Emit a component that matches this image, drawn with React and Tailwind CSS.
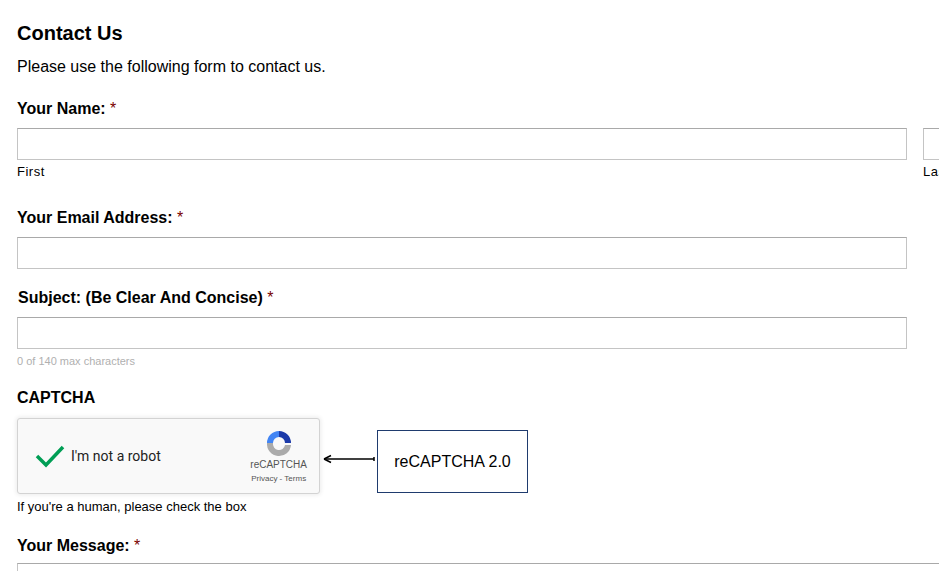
const F = { fontFamily: '"Liberation Sans", Arial, sans-serif' };

function Label({ children, className = '' }) {
  return (
    <div className={`text-[16px] font-bold text-black ${className}`}>
      {children} <span className="font-normal text-[#790000]">*</span>
    </div>
  );
}

function Input({ className = '' }) {
  return <div className={`h-[32px] shrink-0 border border-[#c4c4c4] border-t-[#a9a9a9] bg-white ${className}`} />;
}

export default function App() {
  return (
    <div className="h-[571px] w-[939px] overflow-hidden bg-white text-black" style={F}>
      <div className="w-[1100px] pl-[17px]">
        <h1 className="pt-[20px] text-[20px] font-bold leading-[26px]">Contact Us</h1>
        <p className="mt-[11px] text-[16px] leading-[20px]">Please use the following form to contact us.</p>

        <Label className="mt-[21px] leading-[22px]">Your Name:</Label>
        <div className="mt-[8px] flex gap-[16px]">
          <div className="w-[890px] shrink-0">
            <Input />
            <div className="mt-[2px] text-[13px] tracking-[0.5px]">First</div>
          </div>
          <div className="w-[890px] shrink-0">
            <Input />
            <div className="mt-[2px] text-[13px] tracking-[0.5px]">Last</div>
          </div>
        </div>

        <Label className="mt-[25px] leading-[22px]">Your Email Address:</Label>
        <Input className="mt-[8px] w-[890px]" />

        <Label className="mt-[18px] pl-[1px] leading-[22px]">Subject: (Be Clear And Concise)</Label>
        <Input className="mt-[8px] w-[890px]" />
        <div className="mt-[4px] text-[11px] text-[#b0b0b0]">0 of 140 max characters</div>

        <div className="mt-[18px] text-[16px] font-bold leading-[22px]">CAPTCHA</div>
        <div className="mt-[9px] flex items-start">
          <div className="flex h-[76px] w-[303px] shrink-0 items-center rounded-[3px] border border-[#d3d3d3] bg-[#f9f9f9] shadow-[0_0_4px_1px_rgba(0,0,0,0.08)]">
            <svg className="ml-[17px]" width="30" height="24" viewBox="0 0 30 24">
              <path d="M2 12 L11 21 L28 3" fill="none" stroke="#009e55" strokeWidth="3.5" />
            </svg>
            <span className="ml-[6px] text-[14px] text-[#222]" style={{ fontFamily: 'Roboto, Arial, sans-serif' }}>I'm not a robot</span>
            <div className="ml-auto mr-[12px] flex flex-col items-center">
              <svg width="32" height="32" viewBox="0 0 32 32">
                <path d="M16 4 A12 12 0 0 1 28 16 L22 16 A6 6 0 0 0 16 10 Z" fill="#1c3aa9" />
                <path d="M4 16 A12 12 0 0 1 16 4 L16 10 A6 6 0 0 0 10 16 Z" fill="#4285f4" />
                <path d="M4 16 L10 16 A6 6 0 0 0 22 18 L28 18 A12 12 0 0 1 4 16 Z" fill="#ababab" />
              </svg>
              <div className="text-[10px] leading-[12px] text-[#555]">reCAPTCHA</div>
              <div className="mt-[2px] text-[8px] text-[#555]">Privacy - Terms</div>
            </div>
          </div>
          <svg className="ml-[2px] mt-[36px]" width="54" height="10" viewBox="0 0 54 10">
            <path d="M2 5 H52" stroke="#000" strokeWidth="1.5" />
            <path d="M2 5 L9 1.5 M2 5 L9 8.5" stroke="#000" strokeWidth="1.5" fill="none" />
            <path d="M52 3 V7" stroke="#000" strokeWidth="1.5" />
          </svg>
          <div className="ml-[1px] mt-[12px] flex h-[63px] w-[151px] items-center justify-center border border-[#1f3b6e] text-[16px]">
            reCAPTCHA 2.0
          </div>
        </div>
        <div className="mt-[3px] text-[13px]">If you're a human, please check the box</div>

        <Label className="mt-[18px] leading-[22px]">Your Message:</Label>
        <div className="mt-[6px] h-[80px] w-[1000px] border border-[#c4c4c4] border-t-[#a9a9a9]" />
      </div>
    </div>
  );
}
